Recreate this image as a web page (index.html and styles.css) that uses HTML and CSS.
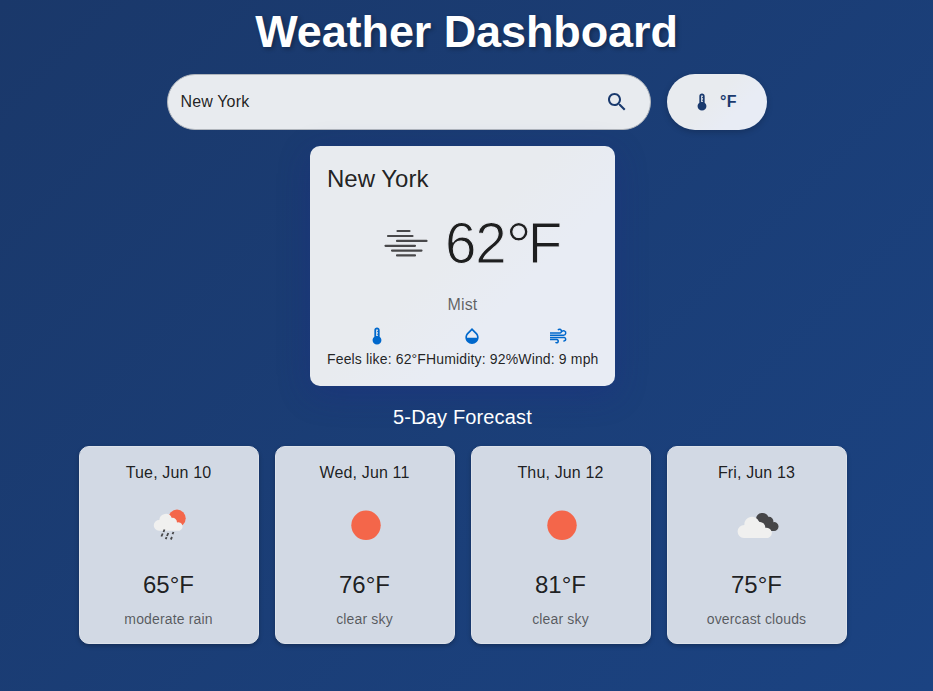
FILE: index.html
```html
<!DOCTYPE html>
<html lang="en">
<head>
<meta charset="utf-8">
<title>Weather Dashboard</title>
<link rel="stylesheet" href="styles.css">
</head>
<body>
<svg class="defs" width="0" height="0" aria-hidden="true">
  <symbol id="thermometer" viewBox="0 0 24 24"><path fill-rule="evenodd" d="M15.200 12.900V5c0-1.800-1.400-3.100-3.200-3.100S8.800 3.200 8.800 5v7.900C7.500 13.900 6.700 15.300 6.700 17c0 2.900 2.400 5.200 5.300 5.200s5.300-2.300 5.300-5.200c0-1.700-.8-3.100-2.100-4.100M11 5c0-.6.400-1 1-1s1 .4 1 1v1h-.8v1.200h.8v2h-.8v1.200H13V12h-2z"/></symbol>
</svg>
<main class="page">
  <h1 class="title">Weather Dashboard</h1>
  <div class="toolbar">
    <div class="search">
      <span class="query">New York</span>
      <svg class="search-icon" viewBox="0 0 24 24"><path d="M15.5 14h-.79l-.28-.27C15.41 12.59 16 11.11 16 9.5 16 5.91 13.09 3 9.5 3S3 5.91 3 9.5 5.91 16 9.5 16c1.61 0 3.09-.59 4.23-1.57l.27.28v.79l5 4.99L20.49 19zm-6 0C7.01 14 5 11.99 5 9.5S7.01 5 9.5 5 14 7.01 14 9.5 11.99 14 9.5 14"/></svg>
    </div>
    <button class="unit"><svg class="icon"><use href="#thermometer"/></svg><span>°F</span></button>
  </div>
  <section class="current">
    <h2 class="city">New York</h2>
    <div class="now">
      <svg class="mist" viewBox="0 0 44 28"><path d="M13.500 2h12M4 7h24.500M13 11.900h29.500M1.500 16.800h29.500M8 21.600h29.500M13 26.400h18"/></svg>
      <span class="temp">62<span class="degree">°</span>F</span>
    </div>
    <p class="condition">Mist</p>
    <div class="details">
      <div class="detail"><svg class="icon"><use href="#thermometer"/></svg><span>Feels like: 62°F</span></div>
      <div class="detail"><svg class="icon" viewBox="0 0 24 24"><path d="M17.66 8 12 2.350 6.340 8C4.780 9.560 4 11.640 4 13.640s.78 4.110 2.340 5.670 3.610 2.350 5.660 2.350 4.100-.79 5.660-2.350S20 15.640 20 13.640 19.220 9.560 17.660 8M6 14c.01-2 .62-3.270 1.760-4.400L12 5.270l4.240 4.380C17.380 10.770 17.990 12 18 14z"/></svg><span>Humidity: 92%</span></div>
      <div class="detail"><svg class="icon wind" viewBox="0 0 20 20"><path d="M2 7.100h9.600a1.900 1.900 0 1 0-1.600-2.900M2 9.300h13.400a2.300 2.300 0 1 0-1.900-3.500M2 11.500h14a1.700 1.700 0 1 1-.6 3.300M2 13.600h6.800a1.600 1.600 0 1 1-1.300 2.700"/></svg><span>Wind: 9 mph</span></div>
    </div>
  </section>
  <h3 class="subtitle">5-Day Forecast</h3>
  <div class="forecast">
    <article class="day"><p class="date">Tue, Jun 10</p>
      <svg class="sky" viewBox="0 0 50 50"><circle class="sun" cx="33" cy="18.300" r="8.700"/><path class="cloud" d="M15 30.700a5.300 5.300 0 0 1 .3-10.800 6.500 6.500 0 0 1 12.500-2 4.400 4.400 0 0 1 5.200 4.500 4.300 4.300 0 0 1 2.500 8.300z"/><path class="rain" d="M20.500 29.500l-1 2.500M18.700 33.500l-1.300 3M24.300 33l-1.300 3M29.500 32l-1 2.200M22.600 37.200l-.9 2M28 37l-1.200 2.500"/></svg>
      <p class="high">65°F</p><p class="desc">moderate rain</p></article>
    <article class="day"><p class="date">Wed, Jun 11</p>
      <svg class="sky" viewBox="0 0 50 50"><circle class="sun" cx="26" cy="25.300" r="14.700"/></svg>
      <p class="high">76°F</p><p class="desc">clear sky</p></article>
    <article class="day"><p class="date">Thu, Jun 12</p>
      <svg class="sky" viewBox="0 0 50 50"><circle class="sun" cx="26" cy="25.300" r="14.700"/></svg>
      <p class="high">81°F</p><p class="desc">clear sky</p></article>
    <article class="day"><p class="date">Fri, Jun 13</p>
      <svg class="sky" viewBox="0 0 50 50"><path class="dark" d="M24 18.500a6.500 6.500 0 0 1 12.300-1.700 4.500 4.500 0 0 1 5 5.400 4.400 4.400 0 1 1 .4 8.700h-5z"/><path class="cloud" d="M11.800 38a6.500 6.500 0 0 1 .6-13 7.500 7.500 0 0 1 14.600-3 5.300 5.300 0 0 1 6.200 6 5 5 0 0 1 2.800 10z"/></svg>
      <p class="high">75°F</p><p class="desc">overcast clouds</p></article>
  </div>
</main>
</body>
</html>
```
FILE: styles.css
```css
* { box-sizing: border-box; }
body {
  margin: 0;
  min-height: 100vh;
  background: linear-gradient(135deg, #1a386a 0%, #1b4382 100%);
  font-family: "Liberation Sans", Arial, sans-serif;
  color: rgba(0, 0, 0, .87);
}
h1, h2, h3, p { margin: 0; font-weight: 400; }
.defs { position: absolute; }
.page { display: flex; flex-direction: column; align-items: center; }
.title {
  height: 74px;
  line-height: 64px;
  font-size: 45px;
  letter-spacing: -.1px;
  font-weight: 700;
  color: #fff;
  text-shadow: 2px 2px 4px rgba(0, 0, 0, .3);
}
.toolbar { display: flex; gap: 16px; height: 56px; }
.search {
  display: flex;
  align-items: center;
  justify-content: space-between;
  width: 484px;
  padding: 0 21px 0 13px;
  border: 1px solid #b0b5bc;
  border-radius: 28px;
  background: #e8ebef;
  font-size: 16px;
  letter-spacing: .15px;
}
.search-icon { width: 24px; height: 24px; fill: #1a3a6e; }
.icon { width: 20px; height: 20px; fill: currentColor; }
.unit {
  display: flex;
  align-items: center;
  justify-content: center;
  gap: 8px;
  width: 100px;
  padding: 0 4px 0 0;
  border: 0;
  border-radius: 28px;
  background: linear-gradient(135deg, #e8ebef 45%, #e8ecf5 70%);
  color: #1a3a6e;
  font: 700 16px "Liberation Sans", Arial, sans-serif;
  letter-spacing: .3px;
  box-shadow: 0 2px 6px rgba(0, 0, 0, .2);
}
.current {
  width: 305px;
  height: 240px;
  margin: 16px 8px 0 0;
  padding: 17px;
  border-radius: 10px;
  background: linear-gradient(135deg, #e8ebef 45%, #e8ecf4 65%);
  box-shadow: 0 8px 32px rgba(31, 38, 135, .3);
}
.city { font-size: 24px; line-height: 32px; }
.now { display: flex; align-items: center; height: 96px; padding-left: 57px; gap: 17px; }
.mist { width: 44px; height: 28px; fill: none; stroke: #48484a; stroke-width: 2.200; stroke-linecap: round; }
.temp { padding-top: 1px; font-size: 56.5px; line-height: 64px; letter-spacing: -1.200px; white-space: nowrap; -webkit-text-stroke: 1px #e8ebf0; }
.degree { font-size: 66px; line-height: 0; vertical-align: -6px; letter-spacing: -4px; }
.condition { height: 35px; line-height: 28px; text-align: center; color: rgba(0, 0, 0, .6); font-size: 16px; letter-spacing: .15px; }
.details { display: flex; justify-content: space-between; }
.detail { display: flex; flex-direction: column; align-items: center; gap: 3px; font-size: 14px; line-height: 20px; letter-spacing: .15px; white-space: nowrap; }
.detail .icon { color: #0068cc; }
.detail .wind { fill: none; stroke: currentColor; stroke-width: 1.500; }
.subtitle { margin: 16px 8px 0 0; height: 44px; line-height: 31px; font-size: 20px; letter-spacing: .15px; color: #fff; }
.forecast { display: flex; gap: 16px; margin-right: 7px; }
.day {
  display: flex;
  flex-direction: column;
  align-items: center;
  width: 180px;
  height: 198px;
  padding: 14px 1px 0 0;
  border: 1px solid #dde2ea;
  border-radius: 10px;
  background: #d2d9e4;
  box-shadow: 0 2px 4px rgba(0, 0, 0, .25);
}
.date { font-size: 16px; line-height: 24px; letter-spacing: .15px; }
.sky { width: 50px; height: 50px; margin: 15px 0 19px; }
.sun { fill: #f4664a; }
.cloud { fill: #f0f0ef; }
.dark { fill: #464648; }
.rain { stroke: #464648; stroke-width: 1.800; fill: none; }
.high { font-size: 24px; line-height: 32px; }
.desc { margin-top: 8px; font-size: 14px; line-height: 20px; letter-spacing: .15px; color: rgba(0, 0, 0, .6); }
```
